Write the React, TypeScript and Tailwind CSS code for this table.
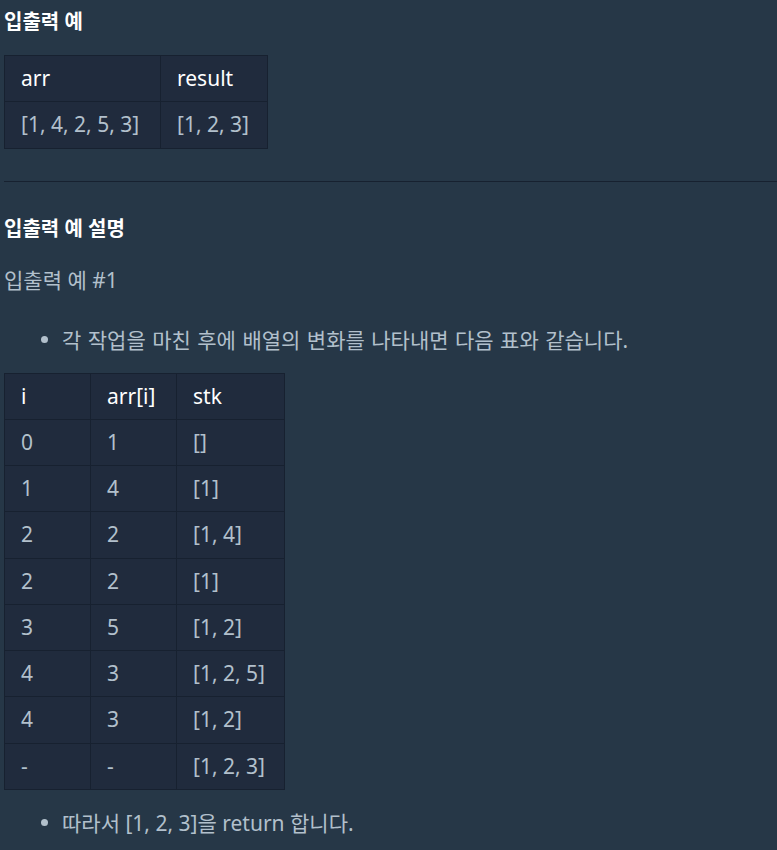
const font = "font-['Noto_Sans','Noto_Sans_CJK_KR',sans-serif]";

const sampleRows = [["[1, 4, 2, 5, 3]", "[1, 2, 3]"]];

const stepRows = [
  ["0", "1", "[]"],
  ["1", "4", "[1]"],
  ["2", "2", "[1, 4]"],
  ["2", "2", "[1]"],
  ["3", "5", "[1, 2]"],
  ["4", "3", "[1, 2, 5]"],
  ["4", "3", "[1, 2]"],
  ["-", "-", "[1, 2, 3]"],
];

function Table({ head, rows, widths }: { head: string[]; rows: string[][]; widths: string[] }) {
  return (
    <table className="border-collapse bg-[#202b3d] text-[21px] leading-[29.25px]">
      <thead>
        <tr>
          {head.map((h, i) => (
            <th
              key={i}
              className={`${widths[i]} border border-[#172130] px-4 py-2 text-left font-normal text-white`}
            >
              {h}
            </th>
          ))}
        </tr>
      </thead>
      <tbody>
        {rows.map((row, r) => (
          <tr key={r}>
            {row.map((cell, c) => (
              <td key={c} className="border border-[#172130] px-4 py-2 text-[#b2c0cc]">
                {cell}
              </td>
            ))}
          </tr>
        ))}
      </tbody>
    </table>
  );
}

function Bullet({ children }: { children: React.ReactNode }) {
  return (
    <div className="flex items-center text-[21px] leading-[30px]">
      <span className="ml-[37px] mr-[14px] h-[7px] w-[7px] rounded-full bg-[#b2c0cc]" />
      <span>{children}</span>
    </div>
  );
}

export default function App() {
  return (
    <div className={`${font} min-h-[850px] bg-[#263747] pl-1 text-[#b2c0cc]`}>
      <h5 className="pt-[9px] text-[20px] leading-[26px] font-bold text-white">입출력 예</h5>
      <div className="mt-5">
        <Table head={["arr", "result"]} rows={sampleRows} widths={["w-[156px]", "w-[107px]"]} />
      </div>
      <hr className="mt-8 border-t border-[#172130]" />
      <h5 className="mt-[34px] text-[20px] leading-[26px] font-bold text-white">입출력 예 설명</h5>
      <p className="mt-[23px] text-[21px] leading-[30px]">입출력 예 #1</p>
      <div className="mt-[30px] [word-spacing:1px]">
        <Bullet>각 작업을 마친 후에 배열의 변화를 나타내면 다음 표와 같습니다.</Bullet>
      </div>
      <div className="mt-[18px]">
        <Table head={["i", "arr[i]", "stk"]} rows={stepRows} widths={["w-[86px]", "w-[86px]", "w-[108px]"]} />
      </div>
      <div className="mt-[18px]">
        <Bullet>따라서 [1, 2, 3]을 return 합니다.</Bullet>
      </div>
    </div>
  );
}
